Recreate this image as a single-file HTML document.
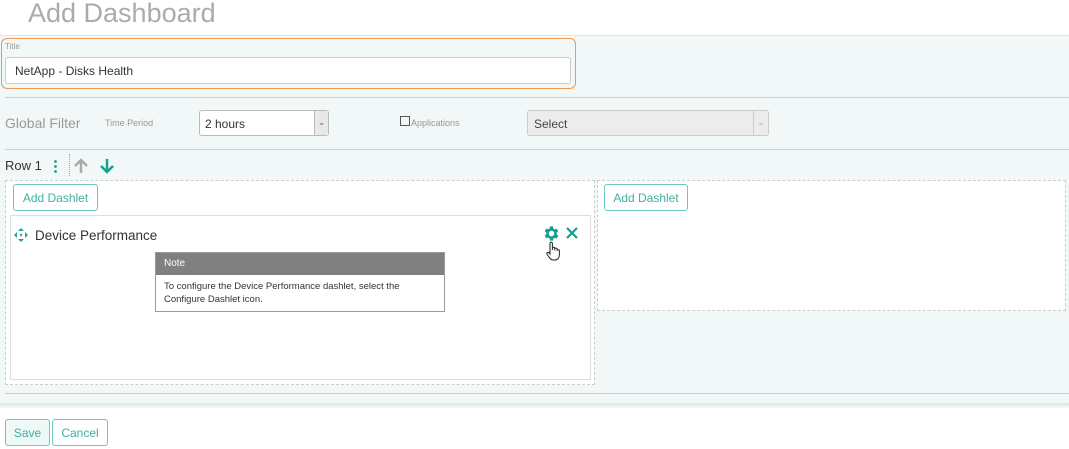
<!DOCTYPE html>
<html><head><style>
*{box-sizing:border-box;margin:0;padding:0}
body{width:1069px;height:449px;overflow:hidden;background:#fff;font-family:"Liberation Sans",sans-serif;position:relative}
.a{position:absolute}
.btn{position:absolute;border:1px solid #6cc9bd;border-radius:3px;color:#3fb0a2;font-size:12px;text-align:center;background:#fff}
</style></head><body>
<div class="a" style="left:28px;top:-2px;font-size:27px;color:#ababab">Add Dashboard</div>
<div class="a" style="left:0;top:35px;width:1069px;height:370px;background:#f1f8f7;border-top:1px solid #dde8e6"></div>
<div class="a" style="left:0;top:403px;width:1069px;height:6px;background:linear-gradient(#dfe3e2,#fff)"></div>
<div class="a" style="left:1px;top:38px;width:575px;height:51px;border:1px solid #f0994f;border-radius:6px"></div>
<div class="a" style="left:5px;top:42px;font-size:8px;color:#999">Title</div>
<div class="a" style="left:5px;top:57px;width:566px;height:27px;background:#fff;border:1px solid #ccc;border-radius:3px;font-size:12px;color:#333;padding:6px 0 0 9px">NetApp - Disks Health</div>
<div class="a" style="left:5px;top:97px;width:1064px;height:1px;background:#d0d0d0"></div>
<div class="a" style="left:5px;top:115px;font-size:14px;color:#9a9a9a">Global Filter</div>
<div class="a" style="left:105px;top:118px;font-size:9px;color:#999">Time Period</div>
<div class="a" style="left:199px;top:110px;width:130px;height:26px;background:#fff;border:1px solid #bbb;border-radius:3px;font-size:12px;color:#333;padding:6px 0 0 5px">2 hours</div>
<div class="a" style="left:314px;top:111px;width:14px;height:24px;background:#e8e8e8;border-left:1px solid #bbb;font-size:9px;color:#666;text-align:center;padding-top:6px">⌄</div>
<div class="a" style="left:400px;top:116px;width:10px;height:10px;border:1px solid #555"></div>
<div class="a" style="left:411px;top:118px;font-size:9px;color:#999">Applications</div>
<div class="a" style="left:527px;top:110px;width:242px;height:26px;background:#ececec;border:1px solid #ccc;border-radius:3px;font-size:12px;color:#444;padding:6px 0 0 6px">Select</div>
<div class="a" style="left:753px;top:111px;width:15px;height:24px;border-left:1px solid #ccc;font-size:9px;color:#aaa;text-align:center;padding-top:6px">⌄</div>
<div class="a" style="left:5px;top:149px;width:1064px;height:1px;background:#d0d0d0"></div>
<div class="a" style="left:5px;top:158px;font-size:13px;color:#333">Row 1</div>
<div class="a" style="left:54px;top:159px;width:3px;height:14px;background:radial-gradient(circle,#2fa898 1.3px,transparent 1.6px) 0 0/3px 5px"></div>
<div class="a" style="left:69px;top:154px;height:22px;border-left:1px dotted #aaa"></div>
<svg class="a" style="left:74px;top:158px" width="14" height="16"><path d="M7 15V2M1 8l6-6 6 6" stroke="#aaa" stroke-width="2.5" fill="none"/></svg>
<svg class="a" style="left:100px;top:158px" width="14" height="16"><path d="M7 1v13M1 8l6 6 6-6" stroke="#15a08f" stroke-width="2.5" fill="none"/></svg>
<div class="a" style="left:5px;top:180px;width:590px;height:205px;border:1px dashed #ccc;background:#fff"></div>
<div class="a" style="left:597px;top:180px;width:469px;height:131px;border:1px dashed #ccc;background:#fff"></div>
<div class="btn" style="left:13px;top:184px;width:85px;height:27px;padding-top:6px">Add Dashlet</div>
<div class="btn" style="left:604px;top:184px;width:84px;height:27px;padding-top:6px">Add Dashlet</div>
<div class="a" style="left:10px;top:215px;width:581px;height:165px;border:1px solid #ddd;background:#fff"></div>
<svg class="a" style="left:14px;top:228px" width="14" height="14"><g fill="#2aa597"><path d="M7 0l3 3H4zM7 14l3-3H4zM0 7l3-3v6zM14 7l-3-3v6z"/><circle cx="7" cy="7" r="1.2"/></g></svg>
<div class="a" style="left:35px;top:228px;font-size:13.5px;color:#333">Device Performance</div>
<svg class="a" style="left:542px;top:224px" width="19" height="19" viewBox="0 0 24 24"><path fill="#159e8e" d="M19.4 13a7.5 7.5 0 000-2l2.1-1.6-2-3.5-2.5 1a7 7 0 00-1.7-1L15 3h-4l-.4 2.7a7 7 0 00-1.7 1l-2.5-1-2 3.5L6.5 11a7.5 7.5 0 000 2l-2.1 1.6 2 3.5 2.5-1a7 7 0 001.7 1L11 21h4l.4-2.7a7 7 0 001.7-1l2.5 1 2-3.5zM13 15.5a3.5 3.5 0 110-7 3.5 3.5 0 010 7z" transform="translate(-1 0)"/></svg>
<svg class="a" style="left:566px;top:227px" width="12" height="12"><path d="M1 1l10 10M11 1L1 11" stroke="#159e8e" stroke-width="2.2"/></svg>
<svg class="a" style="left:546px;top:241px" width="14" height="20" viewBox="0 0 14 20"><path d="M4 10V2.5a1.2 1.2 0 012.4 0V9V7.5a1.2 1.2 0 012.4 0V9.5V8.3a1.2 1.2 0 012.4 0v1.5a1.1 1.1 0 012.2 0V14c0 3-2 5-4.5 5H7C5 19 4 17.5 2.5 15.5L1 13a1.2 1.2 0 012-1.3L4 13z" fill="#fff" stroke="#222" stroke-width="1"/></svg>
<div class="a" style="left:155px;top:252px;width:290px;height:60px;border:1px solid #999;background:#fff"></div>
<div class="a" style="left:156px;top:253px;width:288px;height:22px;background:#808080;color:#fff;font-size:10px;padding:5px 0 0 8px">Note</div>
<div class="a" style="left:164px;top:280px;font-size:9.5px;color:#333;line-height:13px">To configure the Device Performance dashlet, select the<br>Configure Dashlet icon.</div>
<div class="a" style="left:5px;top:393px;width:1064px;height:1px;background:#ccc"></div>
<div class="btn" style="left:5px;top:419px;width:45px;height:27px;padding-top:6px;background:#eef8f6">Save</div>
<div class="btn" style="left:52px;top:419px;width:56px;height:27px;padding-top:6px">Cancel</div>
</body></html>
